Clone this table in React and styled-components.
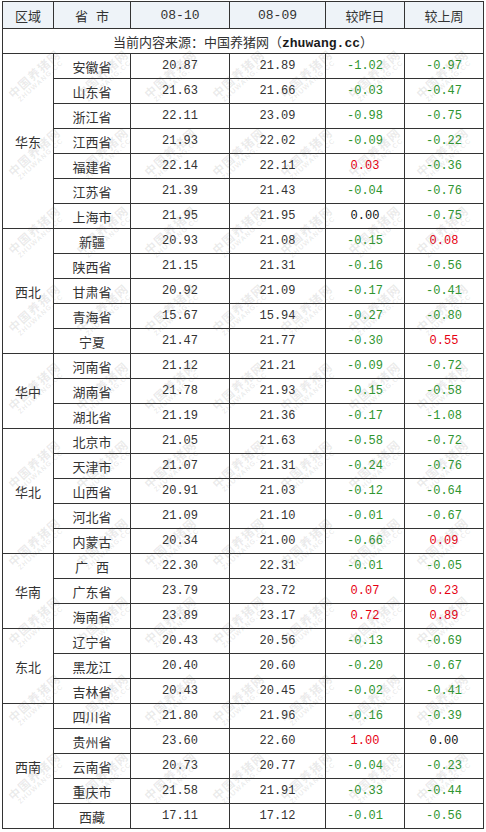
import styled, { createGlobalStyle } from "styled-components";

const GlobalStyle = createGlobalStyle`
  html, body {
    margin: 0;
    padding: 0;
    background: #fff;
  }
  body {
    font-family: "Liberation Mono", "Noto Sans CJK SC", monospace;
    color: #333;
  }
`;

const Wrap = styled.div`
  position: relative;
  width: 481px;
  margin: 1px 0 0 2px;
`;

const Table = styled.table`
  width: 481px;
  table-layout: fixed;
  border-collapse: collapse;
  font-size: 13px;
`;

const Th = styled.td`
  height: 26px;
  padding: 0;
  border: 1px solid #333;
  background: #eef3f8;
  text-align: center;
  vertical-align: middle;
  color: #333;
`;

const SourceCell = styled.td`
  height: 24px;
  padding: 0;
  border: 1px solid #333;
  text-align: center;
  vertical-align: middle;
`;

const Site = styled.b`
  font-family: "Liberation Mono", monospace;
  font-weight: 700;
  color: #1a1a1a;
`;

const Td = styled.td`
  height: 24px;
  padding: 0;
  border: 1px solid #333;
  text-align: center;
  vertical-align: middle;
  white-space: pre;
`;

const Num = styled(Td)`
  font-size: 12px;
  color: ${(p) => p.$color || "#333"};
`;

/* faint diagonal site watermark laid over the table */
const Watermark = styled.div`
  position: absolute;
  top: 36px;
  left: 0;
  pointer-events: none;
  display: grid;
  grid-template-columns: repeat(7, 68px);
  grid-auto-rows: 78px;
`;

const Mark = styled.div`
  display: flex;
  flex-direction: column;
  align-items: center;
  justify-content: center;
  white-space: nowrap;
  transform: rotate(-42deg);
  color: rgba(90, 90, 90, 0.12);
  line-height: 1.1;
`;

const MarkTitle = styled.span`
  font-family: "Noto Sans CJK SC", sans-serif;
  font-size: 12px;
  font-weight: 700;
  letter-spacing: 1px;
`;

const MarkSub = styled.span`
  font-family: "Liberation Sans", sans-serif;
  font-size: 7px;
  font-weight: 700;
  letter-spacing: 1px;
`;

const regions = [
  ["华东", [
    ["安徽省", "20.87", "21.89", "-1.02", "-0.97"],
    ["山东省", "21.63", "21.66", "-0.03", "-0.47"],
    ["浙江省", "22.11", "23.09", "-0.98", "-0.75"],
    ["江西省", "21.93", "22.02", "-0.09", "-0.22"],
    ["福建省", "22.14", "22.11", "0.03", "-0.36"],
    ["江苏省", "21.39", "21.43", "-0.04", "-0.76"],
    ["上海市", "21.95", "21.95", "0.00", "-0.75"],
  ]],
  ["西北", [
    ["新疆", "20.93", "21.08", "-0.15", "0.08"],
    ["陕西省", "21.15", "21.31", "-0.16", "-0.56"],
    ["甘肃省", "20.92", "21.09", "-0.17", "-0.41"],
    ["青海省", "15.67", "15.94", "-0.27", "-0.80"],
    ["宁夏", "21.47", "21.77", "-0.30", "0.55"],
  ]],
  ["华中", [
    ["河南省", "21.12", "21.21", "-0.09", "-0.72"],
    ["湖南省", "21.78", "21.93", "-0.15", "-0.58"],
    ["湖北省", "21.19", "21.36", "-0.17", "-1.08"],
  ]],
  ["华北", [
    ["北京市", "21.05", "21.63", "-0.58", "-0.72"],
    ["天津市", "21.07", "21.31", "-0.24", "-0.76"],
    ["山西省", "20.91", "21.03", "-0.12", "-0.64"],
    ["河北省", "21.09", "21.10", "-0.01", "-0.67"],
    ["内蒙古", "20.34", "21.00", "-0.66", "0.09"],
  ]],
  ["华南", [
    ["广 西", "22.30", "22.31", "-0.01", "-0.05"],
    ["广东省", "23.79", "23.72", "0.07", "0.23"],
    ["海南省", "23.89", "23.17", "0.72", "0.89"],
  ]],
  ["东北", [
    ["辽宁省", "20.43", "20.56", "-0.13", "-0.69"],
    ["黑龙江", "20.40", "20.60", "-0.20", "-0.67"],
    ["吉林省", "20.43", "20.45", "-0.02", "-0.41"],
  ]],
  ["西南", [
    ["四川省", "21.80", "21.96", "-0.16", "-0.39"],
    ["贵州省", "23.60", "22.60", "1.00", "0.00"],
    ["云南省", "20.73", "20.77", "-0.04", "-0.23"],
    ["重庆市", "21.58", "21.91", "-0.33", "-0.44"],
    ["西藏", "17.11", "17.12", "-0.01", "-0.56"],
  ]],
];

function changeColor(v) {
  const n = parseFloat(v);
  if (n < 0) return "#2f952f";
  if (n > 0) return "#e60012";
  return "#111";
}

export default function App() {
  return (
    <>
      <GlobalStyle />
      <Wrap>
        <Table>
          <colgroup>
            <col style={{ width: 51 }} />
            <col style={{ width: 77 }} />
            <col style={{ width: 99 }} />
            <col style={{ width: 96 }} />
            <col style={{ width: 79 }} />
            <col style={{ width: 79 }} />
          </colgroup>
          <tbody>
            <tr>
              <Th>区域</Th>
              <Th>省 市</Th>
              <Th>08-10</Th>
              <Th>08-09</Th>
              <Th>较昨日</Th>
              <Th>较上周</Th>
            </tr>
            <tr>
              <SourceCell colSpan={6}>
                当前内容来源：中国养猪网（<Site>zhuwang.cc</Site>）
              </SourceCell>
            </tr>
            {regions.map(([name, rows]) =>
              rows.map((r, i) => (
                <tr key={name + r[0]}>
                  {i === 0 && <Td rowSpan={rows.length}>{name}</Td>}
                  <Td>{r[0]}</Td>
                  <Num>{r[1]}</Num>
                  <Num>{r[2]}</Num>
                  <Num $color={changeColor(r[3])}>{r[3]}</Num>
                  <Num $color={changeColor(r[4])}>{r[4]}</Num>
                </tr>
              ))
            )}
          </tbody>
        </Table>
        <Watermark aria-hidden="true">
          {Array.from({ length: 70 }).map((_, i) => (
            <Mark key={i}>
              <MarkTitle>中国养猪网</MarkTitle>
              <MarkSub>ZHUWANG.CC</MarkSub>
            </Mark>
          ))}
        </Watermark>
      </Wrap>
    </>
  );
}
